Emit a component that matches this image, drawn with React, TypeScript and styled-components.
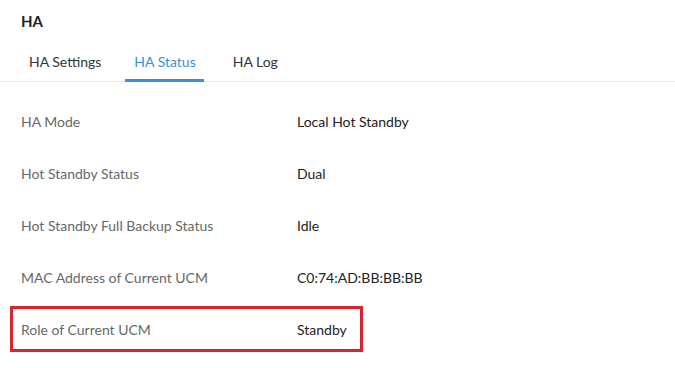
import styled, { createGlobalStyle } from 'styled-components';

const GlobalStyle = createGlobalStyle`
  html, body {
    margin: 0;
    padding: 0;
    background: #fff;
  }
  body {
    font-family: Lato, "Noto Sans", sans-serif;
    -webkit-font-smoothing: antialiased;
  }
`;

const Page = styled.div`
  width: 675px;
  height: 368px;
  overflow: hidden;
  background: #fff;
`;

const Title = styled.h1`
  margin: 0;
  padding: 11px 21px 0 21px;
  font-size: 15px;
  line-height: 20px;
  font-weight: 700;
  color: #222;
`;

const Tabs = styled.div`
  display: flex;
  margin-top: 21px;
  padding-left: 20px;
  border-bottom: 1px solid #e8e8e8;
`;

const Tab = styled.div<{ active?: boolean; spacing?: number }>`
  padding: 0 ${p => (p.active ? 8 : 9)}px 0 9px;
  margin-right: ${p => p.spacing ?? 15}px;
  height: 30px;
  line-height: 20px;
  font-size: 14px;
  color: ${p => (p.active ? '#3d8fd8' : '#333')};
  border-bottom: 3px solid ${p => (p.active ? '#3d8fd8' : 'transparent')};
  box-sizing: border-box;
  margin-bottom: -1px;
`;

const List = styled.div`
  display: flex;
  flex-direction: column;
  padding: 16px 0 0 10px;
`;

const Row = styled.div<{ highlight?: boolean }>`
  display: grid;
  grid-template-columns: 276px auto;
  align-items: center;
  width: 353px;
  height: 46px;
  margin-bottom: 6px;
  padding-left: 8px;
  box-sizing: border-box;
  border: 3px solid ${p => (p.highlight ? '#d9252f' : 'transparent')};
  font-size: 14px;
`;

const Label = styled.span`
  color: #686868;
`;

const Value = styled.span`
  color: #222;
  white-space: nowrap;
`;

const rows = [
  ['HA Mode', 'Local Hot Standby'],
  ['Hot Standby Status', 'Dual'],
  ['Hot Standby Full Backup Status', 'Idle'],
  ['MAC Address of Current UCM', 'C0:74:AD:BB:BB:BB'],
  ['Role of Current UCM', 'Standby'],
];

export default function App() {
  return (
    <Page>
      <GlobalStyle />
      <Title>HA</Title>
      <Tabs>
        <Tab>HA Settings</Tab>
        <Tab active spacing={20}>HA Status</Tab>
        <Tab>HA Log</Tab>
      </Tabs>
      <List>
        {rows.map(([label, value], i) => (
          <Row key={label} highlight={i === rows.length - 1}>
            <Label>{label}</Label>
            <Value>{value}</Value>
          </Row>
        ))}
      </List>
    </Page>
  );
}
